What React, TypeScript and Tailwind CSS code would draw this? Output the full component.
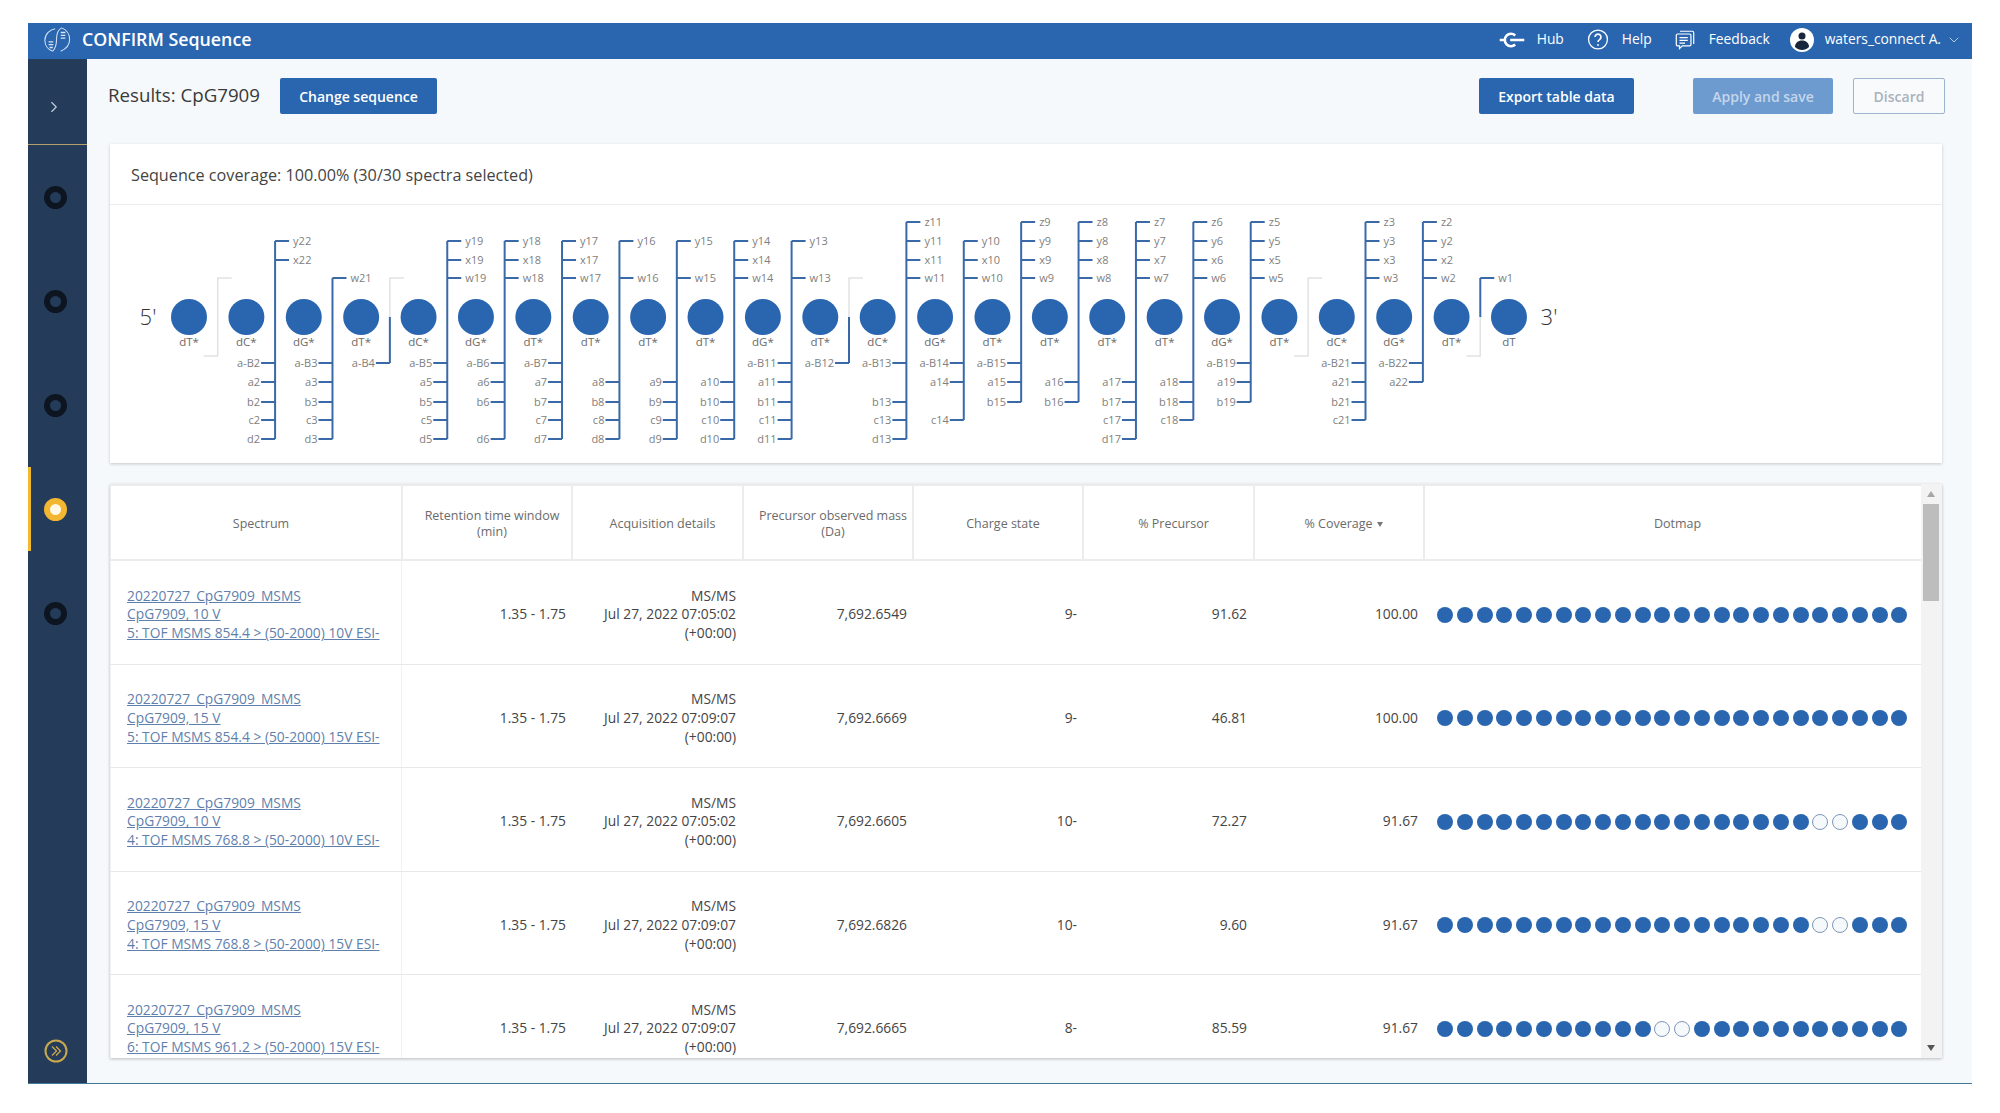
import { ChevronDown, ChevronRight } from "lucide-react";

const BLUE = "#2a66b0";

// [top labels, bottom labels]; gray gaps have no fragments on that side
const gaps: [string[], string[]][] = [
  [[], []],
  [["y22", "x22"], ["a-B2", "a2", "b2", "c2", "d2"]],
  [["w21"], ["a-B3", "a3", "b3", "c3", "d3"]],
  [[], ["a-B4"]],
  [["y19", "x19", "w19"], ["a-B5", "a5", "b5", "c5", "d5"]],
  [["y18", "x18", "w18"], ["a-B6", "a6", "b6", "d6"]],
  [["y17", "x17", "w17"], ["a-B7", "a7", "b7", "c7", "d7"]],
  [["y16", "w16"], ["a8", "b8", "c8", "d8"]],
  [["y15", "w15"], ["a9", "b9", "c9", "d9"]],
  [["y14", "x14", "w14"], ["a10", "b10", "c10", "d10"]],
  [["y13", "w13"], ["a-B11", "a11", "b11", "c11", "d11"]],
  [[], ["a-B12"]],
  [["z11", "y11", "x11", "w11"], ["a-B13", "b13", "c13", "d13"]],
  [["y10", "x10", "w10"], ["a-B14", "a14", "c14"]],
  [["z9", "y9", "x9", "w9"], ["a-B15", "a15", "b15"]],
  [["z8", "y8", "x8", "w8"], ["a16", "b16"]],
  [["z7", "y7", "x7", "w7"], ["a17", "b17", "c17", "d17"]],
  [["z6", "y6", "x6", "w6"], ["a18", "b18", "c18"]],
  [["z5", "y5", "x5", "w5"], ["a-B19", "a19", "b19"]],
  [[], []],
  [["z3", "y3", "x3", "w3"], ["a-B21", "a21", "b21", "c21"]],
  [["z2", "y2", "x2", "w2"], ["a-B22", "a22"]],
  [["w1"], []],
];

const bases = ["dT*", "dC*", "dG*", "dT*", "dC*", "dG*", "dT*", "dT*", "dT*", "dT*", "dG*", "dT*", "dC*", "dG*", "dT*", "dT*", "dT*", "dT*", "dG*", "dT*", "dC*", "dG*", "dT*", "dT"];

// y of a fragment tick inside the svg, by its letter
const topY: Record<string, number> = { z: 17, y: 36, x: 55, w: 73 };
const botY: Record<string, number> = { "a-B": 158, a: 177, b: 197, c: 215, d: 234 };
const MID = 112;

const circleX = (i: number) => 79 + 57.39 * i;

function SequenceMap() {
  return (
    <svg viewBox="0 0 1832 258" className="block h-[258px] w-full" style={{ fontFamily: '"Open Sans", sans-serif' }}>
      <text x="38" y={MID + 8} textAnchor="middle" fontSize="22" fontWeight="300" fill="#333">5'</text>
      <text x="1439" y={MID + 8} textAnchor="middle" fontSize="22" fontWeight="300" fill="#333">3'</text>
      {gaps.map(([top, bottom], i) => {
        const x = circleX(i) + 28.7;
        const topYs = top.map((l) => topY[l[0]]);
        const botYs = bottom.map((l) => botY[l.startsWith("a-B") ? "a-B" : l[0]]);
        return (
          <g key={i} fontSize="11" fill="#808080">
            {top.length > 0 ? (
              <path d={`M${x} ${MID}V${Math.min(...topYs)}`} stroke="#3a69a8" strokeWidth="2" />
            ) : (
              <path d={`M${x} ${MID}V73H${x + 14}`} stroke="#e2e2e2" strokeWidth="1.5" fill="none" />
            )}
            {bottom.length > 0 ? (
              <path d={`M${x} ${MID}V${Math.max(...botYs)}`} stroke="#3a69a8" strokeWidth="2" />
            ) : (
              <path d={`M${x} ${MID}V151H${x - 14}`} stroke="#e2e2e2" strokeWidth="1.5" fill="none" />
            )}
            {top.map((l, j) => (
              <g key={l}>
                <path d={`M${x} ${topYs[j]}H${x + 14}`} stroke="#3a69a8" strokeWidth="2" />
                <text x={x + 18} y={topYs[j] + 4}>{l}</text>
              </g>
            ))}
            {bottom.map((l, j) => (
              <g key={l}>
                <path d={`M${x} ${botYs[j]}H${x - 14}`} stroke="#3a69a8" strokeWidth="2" />
                <text x={x - 15} y={botYs[j] + 4} textAnchor="end">{l}</text>
              </g>
            ))}
          </g>
        );
      })}
      {bases.map((b, i) => (
        <g key={i}>
          <circle cx={circleX(i)} cy={MID} r="18" fill={BLUE} />
          <text x={circleX(i)} y={MID + 29} textAnchor="middle" fontSize="11.5" fill="#6a6a6a">{b}</text>
        </g>
      ))}
    </svg>
  );
}

function Logo() {
  return (
    <svg viewBox="0 0 30 30" className="h-[28px] w-[28px]" fill="none" stroke="#d8e5f4" strokeWidth="1.1">
      <path d="M13 3C7 4 2 9 2 15.500c0 5.500 3.500 10 8.500 11.500" />
      <path d="M10.500 27c4-4 4-9 4-13s1.500-10 5.500-12" />
      <path d="M20 2c5 2 8.500 6.500 8.500 12.500S25 24.500 19 27" />
      <path d="M19 7h5M19 10h5M19 13h5M6 17h5M6 20h5M7 23h3.500" strokeWidth="1.5" />
    </svg>
  );
}

function HubIcon() {
  return (
    <svg viewBox="0 0 28 22" className="h-[20px] w-[26px]" fill="none" stroke="white">
      <path d="M17.500 6A6.800 6.800 0 1 0 17.500 16" strokeWidth="2.800" />
      <path d="M0.500 11h5.500M12 11h15.500" strokeWidth="2.600" />
    </svg>
  );
}

function HelpIcon() {
  return (
    <svg viewBox="0 0 24 24" className="h-[23px] w-[22px]" fill="none" stroke="white" strokeWidth="1.4">
      <circle cx="12" cy="12" r="10.300" />
      <path d="M8.800 9.300a3.200 3.200 0 1 1 4.900 2.800c-1.100.7-1.700 1.300-1.700 2.700" strokeWidth="1.800" />
      <circle cx="12" cy="18" r="1" fill="white" stroke="none" />
    </svg>
  );
}

function FeedbackIcon() {
  return (
    <svg viewBox="0 0 24 24" className="h-[23px] w-[22px]" fill="none" stroke="white" strokeWidth="1.3">
      <path d="M6.500 3h13.500a1.500 1.500 0 0 1 1.500 1.500V17" />
      <path d="M4 6h13a1.500 1.500 0 0 1 1.500 1.500v10a1.500 1.500 0 0 1-1.500 1.500H9l-3 3v-3H4a1.500 1.500 0 0 1-1.500-1.500v-10A1.500 1.500 0 0 1 4 6z" />
      <path d="M6 10h9M6 13h9M6 16h6" />
    </svg>
  );
}

function UserIcon() {
  return (
    <svg viewBox="0 0 24 24" className="h-[24px] w-[24px]">
      <circle cx="12" cy="12" r="12" fill="white" />
      <circle cx="12" cy="8" r="3.500" fill="#17263c" />
      <path d="M5 19c0-4 3-6.500 7-6.500s7 2.500 7 6.500c-2 2-4.500 3-7 3s-5-1-7-3z" fill="#17263c" />
    </svg>
  );
}

function NavDot({ active = false }: { active?: boolean }) {
  return (
    <div className="flex h-[104px] items-center">
      <div className={active ? "h-[84px] w-[3px] bg-[#f0b92e]" : "h-[84px] w-[3px]"} />
      <div className="flex flex-1 justify-center pr-[8px]">
        {active ? (
          <div className="h-[23px] w-[23px] rounded-full border-[6px] border-[#f2b630] bg-[#fff8e4]" />
        ) : (
          <div className="h-[23px] w-[23px] rounded-full border-[6px] border-[#0d1520]" />
        )}
      </div>
    </div>
  );
}

const columns = "grid grid-cols-[292px_170px_171px_170px_170px_171px_170px_1fr]";

const rows = [
  { file: "CpG7909, 10 V", fn: "5: TOF MSMS 854.4 > (50-2000) 10V ESI-", time: "Jul 27, 2022 07:05:02", mass: "7,692.6549", charge: "9-", prec: "91.62", cov: "100.00", empty: [] as number[] },
  { file: "CpG7909, 15 V", fn: "5: TOF MSMS 854.4 > (50-2000) 15V ESI-", time: "Jul 27, 2022 07:09:07", mass: "7,692.6669", charge: "9-", prec: "46.81", cov: "100.00", empty: [] },
  { file: "CpG7909, 10 V", fn: "4: TOF MSMS 768.8 > (50-2000) 10V ESI-", time: "Jul 27, 2022 07:05:02", mass: "7,692.6605", charge: "10-", prec: "72.27", cov: "91.67", empty: [19, 20] },
  { file: "CpG7909, 15 V", fn: "4: TOF MSMS 768.8 > (50-2000) 15V ESI-", time: "Jul 27, 2022 07:09:07", mass: "7,692.6826", charge: "10-", prec: "9.60", cov: "91.67", empty: [19, 20] },
  { file: "CpG7909, 15 V", fn: "6: TOF MSMS 961.2 > (50-2000) 15V ESI-", time: "Jul 27, 2022 07:09:07", mass: "7,692.6665", charge: "8-", prec: "85.59", cov: "91.67", empty: [11, 12] },
];

const headers = ["Spectrum", "Retention time window (min)", "Acquisition details", "Precursor observed mass (Da)", "Charge state", "% Precursor"];

function ResultsTable() {
  return (
    <div className="flex h-[574px] bg-white shadow-[0_1px_3px_rgba(0,0,0,0.25)]">
      <div className="flex-1 overflow-hidden">
        <div className={`${columns} h-[77px] border-y-2 border-l border-[#ececec] text-center text-[12.5px] leading-[16.5px] text-[#6b6b6b]`}>
          {headers.map((h, i) => (
            <div key={h} className="flex items-center justify-center whitespace-nowrap border-r-2 border-[#ececec] pl-[10px] pt-[3px]">
              {i === 1 || i === 3 ? (
                <span>{i === 1 ? "Retention time window" : "Precursor observed mass"}<br />{i === 1 ? "(min)" : "(Da)"}</span>
              ) : h}
            </div>
          ))}
          <div className="flex items-center justify-center gap-1 border-r-2 border-[#ececec] pl-[9px] pt-[3px]">
            % Coverage
            <span className="h-0 w-0 border-x-[3.500px] border-t-[5px] border-x-transparent border-t-[#777]" />
          </div>
          <div className="flex items-center justify-center pl-[9px] pt-[3px]">Dotmap</div>
        </div>
        {rows.map((r) => (
          <div key={r.fn} className={`${columns} h-[103.500px] border-b border-[#e8e8e8] text-[13.800px] leading-[18.600px] text-[#444] [&>div]:pt-[5px]`}>
            <div className="flex flex-col justify-center border-x border-[#f1f1f1] pl-[16px] text-[#5f7fad] underline">
              <span>20220727_CpG7909_MSMS</span>
              <span>{r.file}</span>
              <span className="whitespace-nowrap">{r.fn}</span>
            </div>
            <div className="flex items-center justify-end pr-[6px]">1.35 - 1.75</div>
            <div className="flex flex-col items-end justify-center pr-[7px]">
              <span>MS/MS</span>
              <span className="whitespace-nowrap">{r.time}</span>
              <span>(+00:00)</span>
            </div>
            <div className="flex items-center justify-end pr-[6px]">{r.mass}</div>
            <div className="flex items-center justify-end pr-[6px]">{r.charge}</div>
            <div className="flex items-center justify-end pr-[7px]">{r.prec}</div>
            <div className="flex items-center justify-end pr-[6px]">{r.cov}</div>
            <div className="flex items-center gap-[3.760px] pl-[13px]">
              {Array.from({ length: 24 }, (_, d) => (
                <span
                  key={d}
                  className={r.empty.includes(d)
                    ? "h-[16px] w-[16px] rounded-full border border-[#7f97b8] bg-[#f6f9fb]"
                    : "h-[16px] w-[16px] rounded-full bg-[#2a66b0]"}
                />
              ))}
            </div>
          </div>
        ))}
      </div>
      <div className="flex w-[21px] flex-col items-center bg-[#f3f3f3] pr-[1px]">
        <span className="mt-[7px] h-0 w-0 border-x-[4px] border-b-[6px] border-x-transparent border-b-[#a6a6a6]" />
        <span className="mt-[7px] h-[97px] w-[16px] bg-[#bdbdbd]" />
        <span className="mt-auto mb-[7px] h-0 w-0 border-x-[4px] border-t-[6px] border-x-transparent border-t-[#555]" />
      </div>
    </div>
  );
}

export default function App() {
  return (
    <div className="h-[1113px] w-full bg-white px-[28px] pt-[23px]" style={{ fontFamily: '"Open Sans", sans-serif' }}>
      <div className="flex h-[1061px] flex-col border-b border-[#3f7a9a]">
        <header className="flex h-[36px] items-center bg-[#2a66b0] pb-[3px] text-white">
          <div className="ml-[15px] mr-[11px]"><Logo /></div>
          <span className="text-[17.800px] font-semibold">CONFIRM Sequence</span>
          <div className="ml-auto flex items-center text-[13.800px]">
            <HubIcon />
            <span className="ml-[12px]">Hub</span>
            <span className="ml-[23px]"><HelpIcon /></span>
            <span className="ml-[13px]">Help</span>
            <span className="ml-[22px]"><FeedbackIcon /></span>
            <span className="ml-[13px]">Feedback</span>
            <span className="ml-[20px]"><UserIcon /></span>
            <span className="ml-[11px]">waters_connect A.</span>
            <ChevronDown className="ml-[5px] mr-[10px] h-[16px] w-[16px]" strokeWidth={1} />
          </div>
        </header>
        <div className="flex flex-1">
          <aside className="flex w-[59px] flex-col bg-[#243c5a]">
            <div className="flex h-[86px] items-center justify-center border-b border-[#b59f6a] pr-[7px] pt-[10px]">
              <ChevronRight className="h-[18px] w-[18px] text-[#c5ced9]" strokeWidth={1.5} />
            </div>
            <NavDot />
            <NavDot />
            <NavDot />
            <NavDot active />
            <NavDot />
            <div className="mt-auto mb-[20px] flex justify-center pr-[3px]">
              <svg viewBox="0 0 24 24" className="h-[24px] w-[24px]" fill="none" stroke="#c9a94f">
                <circle cx="12" cy="12" r="10.500" strokeWidth="2" />
                <path d="M8 7.500l4.500 4.500L8 16.500M12 7.500l4.500 4.500L12 16.500" strokeWidth="1.300" />
              </svg>
            </div>
          </aside>
          <main className="flex-1 bg-[#f6f9fb] pl-[23px] pr-[30px] pt-[19px]">
            <div className="-ml-[2px] -mr-[3px] flex h-[36px] items-center">
              <h1 className="pb-[2px] text-[18.700px] text-[#3a3a3a] [font-weight:500]">Results: CpG7909</h1>
              <button className="ml-[20px] h-[36px] w-[157px] rounded-[2px] bg-[#2a66b0] text-[14px] font-semibold text-white">Change sequence</button>
              <button className="ml-auto h-[36px] w-[155px] rounded-[2px] bg-[#2a66b0] text-[14px] font-semibold text-white">Export table data</button>
              <button className="ml-[59px] h-[36px] w-[140px] rounded-[2px] bg-[#6d9bd0] text-[14px] font-semibold text-[#c4d6ea]">Apply and save</button>
              <button className="ml-[20px] h-[36px] w-[92px] rounded-[2px] border border-[#9db4cf] bg-[#f9fafb] text-[14px] font-semibold text-[#a9b2bd]">Discard</button>
            </div>
            <section className="mt-[30px] h-[319px] bg-white shadow-[0_1px_3px_rgba(0,0,0,0.2)]">
              <div className="flex h-[61px] items-center border-b border-[#ececec] pl-[21px] pt-[2px] text-[16.200px] text-[#444] [font-weight:500]">
                Sequence coverage: 100.00% (30/30 spectra selected)
              </div>
              <SequenceMap />
            </section>
            <section className="mt-[21px]">
              <ResultsTable />
            </section>
          </main>
        </div>
      </div>
    </div>
  );
}
